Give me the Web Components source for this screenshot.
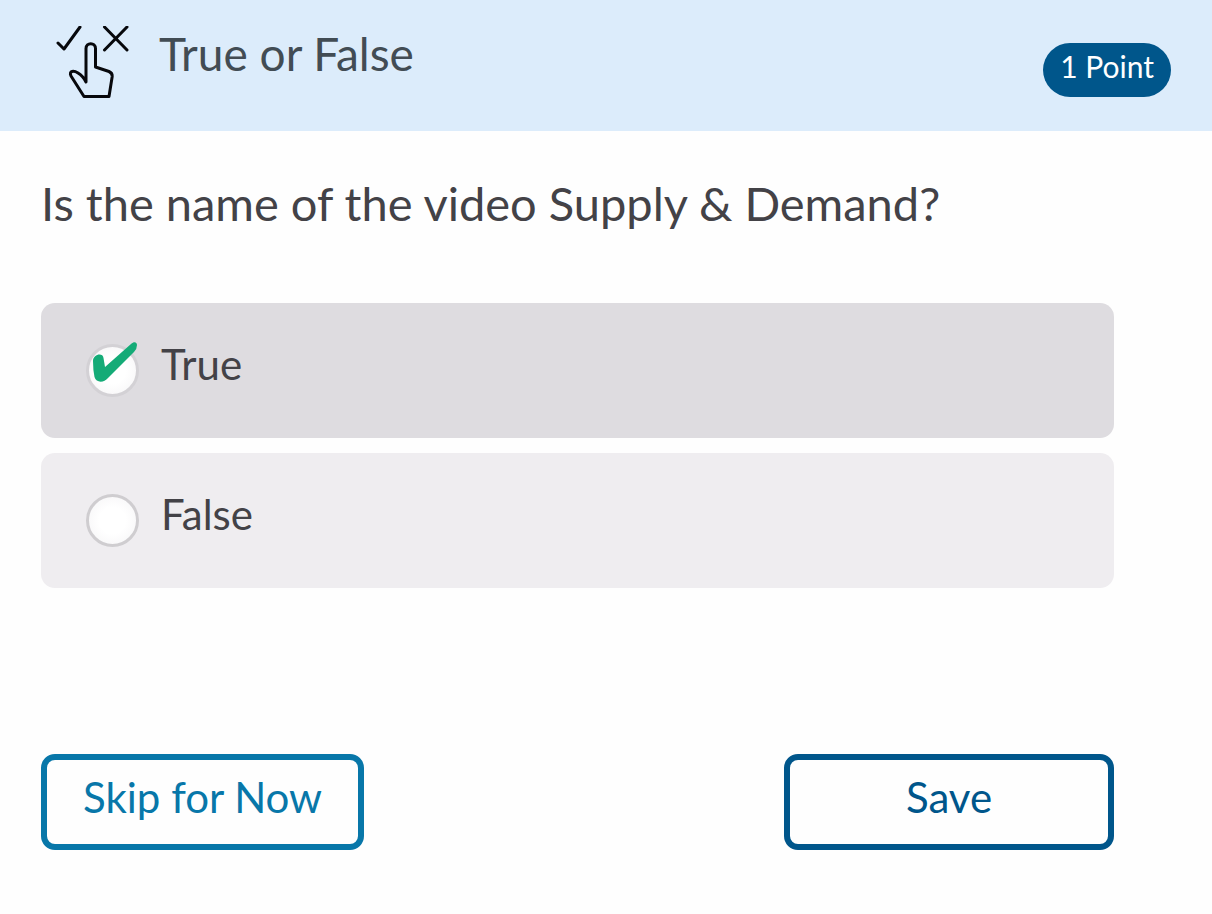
<!DOCTYPE html>
<html lang="en">
<head>
<meta charset="utf-8">
<meta name="viewport" content="width=device-width, initial-scale=1">
<title>True or False</title>
<style>
  body {
    --ink: #434247;
    --navy: #00568b;
    --blue: #0877a9;
    margin: 0;
    background: #fefefe;
    color: var(--ink);
    font-family: Lato, "Liberation Sans", sans-serif;
  }
</style>
</head>
<body>
<quiz-question>
  <question-header slot="header" points="1 Point">True or False</question-header>
  <span slot="question">Is the name of the video Supply &amp; Demand?</span>
  <answer-list slot="answers">
    <answer-option value="true" checked>True</answer-option>
    <answer-option value="false">False</answer-option>
  </answer-list>
  <quiz-button slot="actions">Skip for Now</quiz-button>
  <quiz-button slot="actions" kind="primary">Save</quiz-button>
</quiz-question>

<script>
class QuestionHeader extends HTMLElement {
  constructor() {
    super();
    this.attachShadow({ mode: "open" });
  }

  connectedCallback() {
    this.shadowRoot.innerHTML = `
      <style>
        :host {
          display: block;
          background: #dcecfb;
        }

        header {
          display: flex;
          align-items: flex-start;
          padding: 26px 41px 49px 55px;
        }

        svg {
          flex: none;
          width: 76px;
          height: 76px;
          margin-bottom: -20px;
        }

        h1 {
          flex: 1;
          margin: 0 0 0 28px;
          font-size: 46px;
          font-weight: 400;
          line-height: 56px;
          color: #424c54;
        }

        .points {
          box-sizing: border-box;
          height: 54px;
          margin-top: 17px;
          margin-bottom: -17px;
          padding: 3px 17px 11px;
          border-radius: 27px;
          background: var(--navy);
          color: #fff;
          font-size: 30px;
          line-height: 40px;
          white-space: nowrap;
        }
      </style>
      <header>
        <svg viewBox="55 26 76 76" fill="none" stroke="#07080c" stroke-width="3" stroke-linecap="round" stroke-linejoin="round" aria-hidden="true">
          <path d="M58 43 L64 49 L80 27"/>
          <path d="M104.500 27 L127 50 M127 27 L104.500 50"/>
          <path d="M86 82 V48.500 C86 42 95.500 42 95.500 48.500 V67 L109 71.500 Q112.500 73 112.200 76.500 L109 96.500 H84 L71 76 C68.500 70.500 74 70.500 78 73 Q83 76 86 82 Z"/>
        </svg>
        <h1><slot></slot></h1>
        <span class="points">${this.getAttribute("points") || ""}</span>
      </header>
    `;
  }
}

class AnswerOption extends HTMLElement {
  constructor() {
    super();
    this.attachShadow({ mode: "open" });
  }

  connectedCallback() {
    this.shadowRoot.innerHTML = `
      <style>
        :host {
          display: block;
        }

        label {
          display: flex;
          align-items: center;
          gap: 22px;
          min-height: 135px;
          padding-left: 45px;
          border-radius: 14px;
          background: #efedf0;
          cursor: pointer;
        }

        label:has(input:checked) {
          background: #dedce0;
        }

        .radio {
          position: relative;
          display: flex;
        }

        input {
          appearance: none;
          width: 53px;
          height: 53px;
          margin: 0;
          border: 3px solid #cfcdd0;
          border-radius: 50%;
          background: radial-gradient(#fff 40%, #f4f3f5);
        }

        svg {
          display: none;
          position: absolute;
          left: 5px;
          top: -3px;
          width: 48px;
          height: 44px;
          pointer-events: none;
        }

        input:checked {
          border-color: #d3d1d5;
        }

        input:checked + svg {
          display: block;
        }

        .text {
          padding-bottom: 14px;
          font-size: 42px;
          line-height: 48px;
        }
      </style>
      <label>
        <span class="radio">
          <input type="radio" value="${this.getAttribute("value")}">
          <svg viewBox="0 0 48 44" fill="#14ab77" aria-hidden="true">
            <path d="M2 20 C2 13 12 11 12.500 17 L14 26 L40 3 C43 0 46 1 46 4 Q46 8 43 11 L17 37 C13 42 5 42 3.500 36 Q2 29 2 20 Z"/>
          </svg>
        </span>
        <span class="text"><slot></slot></span>
      </label>
    `;

    this._input = this.shadowRoot.querySelector("input");
    this._input.checked = this.hasAttribute("checked");
    this._input.addEventListener("change", this._onChange.bind(this));
  }

  _onChange() {
    this.dispatchEvent(new CustomEvent("answer-change", { bubbles: true }));
  }

  set checked(value) {
    this._input.checked = value;
  }
}

class AnswerList extends HTMLElement {
  constructor() {
    super();
    this.attachShadow({ mode: "open" });
    this.shadowRoot.innerHTML = `
      <style>
        :host {
          display: flex;
          flex-direction: column;
          gap: 15px;
        }
      </style>
      <slot></slot>
    `;
    this.addEventListener("answer-change", this._onAnswerChange.bind(this));
  }

  connectedCallback() {
    this.setAttribute("role", "radiogroup");
  }

  // Radios in separate shadow roots don't share a group
  _onAnswerChange(event) {
    this.querySelectorAll("answer-option").forEach((option) => {
      option.checked = option === event.target;
    });
  }
}

class QuizButton extends HTMLElement {
  constructor() {
    super();
    this.attachShadow({ mode: "open" });
    this.shadowRoot.innerHTML = `
      <style>
        :host {
          display: block;
          color: var(--blue);
        }

        :host([kind="primary"]) {
          min-width: 330px;
          color: var(--navy);
        }

        button {
          width: 100%;
          padding: 13px 36px 23px;
          border: 6px solid currentColor;
          border-radius: 14px;
          background: #fefefe;
          color: inherit;
          font-family: inherit;
          font-size: 42px;
          line-height: 48px;
          cursor: pointer;
        }
      </style>
      <button type="button"><slot></slot></button>
    `;
  }
}

class QuizQuestion extends HTMLElement {
  constructor() {
    super();
    this.attachShadow({ mode: "open" });
    this.shadowRoot.innerHTML = `
      <style>
        :host {
          display: block;
        }

        main {
          padding: 44px 98px 64px 41px;
        }

        h2 {
          margin: 0 0 72px;
          font-size: 47px;
          font-weight: 400;
          line-height: 56px;
        }

        .actions {
          display: flex;
          justify-content: space-between;
          margin-top: 166px;
        }
      </style>
      <slot name="header"></slot>
      <main>
        <h2><slot name="question"></slot></h2>
        <slot name="answers"></slot>
        <div class="actions"><slot name="actions"></slot></div>
      </main>
    `;
  }
}

customElements.define("question-header", QuestionHeader);
customElements.define("answer-option", AnswerOption);
customElements.define("answer-list", AnswerList);
customElements.define("quiz-button", QuizButton);
customElements.define("quiz-question", QuizQuestion);
</script>
</body>
</html>
